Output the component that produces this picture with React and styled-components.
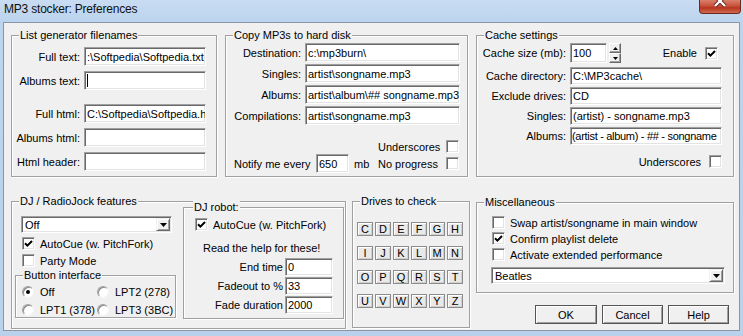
import React from 'react';
import styled, { createGlobalStyle } from 'styled-components';

const GlobalStyle = createGlobalStyle`
  html, body { margin: 0; padding: 0; background: #b9d1ea; }
  * { box-sizing: border-box; }
`;

const Check = ({ on }) => (
  <CheckBox>
    {on && (
      <svg width="9" height="9" viewBox="0 0 9 9">
        <path d="M1 4.2 L3.4 6.6 L8 2" stroke="#000" strokeWidth="2" fill="none" />
      </svg>
    )}
  </CheckBox>
);

const CheckOption = ({ on, children }) => (
  <CheckRow>
    <Check on={on} />
    <span>{children}</span>
  </CheckRow>
);

const RadioOption = ({ on, children }) => (
  <CheckRow $gap={6}>
    <RadioDot>{on && <Dot />}</RadioDot>
    <span>{children}</span>
  </CheckRow>
);

const DropDown = ({ width, children }) => (
  <Combo $w={width}>
    <span>{children}</span>
    <ArrowButton>
      <svg width="7" height="4" viewBox="0 0 7 4"><path d="M0 0 H7 L3.5 4 Z" fill="#000" /></svg>
    </ArrowButton>
  </Combo>
);

const drives = 'CDEFGHIJKLMNOPQRSTUVWXYZ'.split('');

export default function App() {
  return (
    <>
      <GlobalStyle />
      <Window>
        <TitleBar>
          <Title>MP3 stocker: Preferences</Title>
          <CloseButton>
            <svg width="14" height="14" viewBox="0 0 14 14">
              <path d="M2 2 L12 12 M12 2 L2 12" stroke="#5a1a12" strokeWidth="4" />
              <path d="M2 2 L12 12 M12 2 L2 12" stroke="#fff" strokeWidth="2.4" />
            </svg>
          </CloseButton>
        </TitleBar>

        <Client>
          <TopRow>
            <GroupBox $w={206} $h={142}>
              <Caption>List generator filenames</Caption>
              <FormGrid $cols="68px 122px" $pad="11px 0 0 0" $rowGap={5}>
                <FieldLabel>Full text:</FieldLabel>
                <Edit>:\Softpedia\Softpedia.txt</Edit>
                <FieldLabel>Albums text:</FieldLabel>
                <Edit><Caret /></Edit>
                <FieldLabel $push={9}>Full html:</FieldLabel>
                <Edit $push={9}>C:\Softpedia\Softpedia.h</Edit>
                <FieldLabel>Albums html:</FieldLabel>
                <Edit />
                <FieldLabel>Html header:</FieldLabel>
                <Edit />
              </FormGrid>
            </GroupBox>

            <GroupBox $w={243} $h={142}>
              <Caption>Copy MP3s to hard disk</Caption>
              <FormGrid $cols="75px 155px" $pad="7px 0 0 0" $rowGap={2}>
                <FieldLabel>Destination:</FieldLabel>
                <Edit>c:\mp3burn\</Edit>
                <FieldLabel>Singles:</FieldLabel>
                <Edit>artist\songname.mp3</Edit>
                <FieldLabel>Albums:</FieldLabel>
                <Edit>artist\album\## songname.mp3</Edit>
                <FieldLabel>Compilations:</FieldLabel>
                <Edit>artist\songname.mp3</Edit>
              </FormGrid>
              <OptionLine $top={15} $right={8}>
                <OptLabel>Underscores</OptLabel>
                <Check />
              </OptionLine>
              <NotifyLine>
                <NotifyText>Notify me every</NotifyText>
                <Edit $w={33}>650</Edit>
                <Unit>mb</Unit>
                <OptLabel $auto>No progress</OptLabel>
                <Check />
              </NotifyLine>
            </GroupBox>

            <GroupBox $w={258} $h={142}>
              <Caption>Cache settings</Caption>
              <FormGrid $cols="89px 152px" $pad="7px 0 0 0" $rowGap={2}>
                <FieldLabel>Cache size (mb):</FieldLabel>
                <SizeLine>
                  <Edit $w={37} $h={20}>100</Edit>
                  <Spinner>
                    <SpinHalf><svg width="5" height="3" viewBox="0 0 5 3"><path d="M0 3 L2.5 0 L5 3 Z" fill="#000" /></svg></SpinHalf>
                    <SpinHalf><svg width="5" height="3" viewBox="0 0 5 3"><path d="M0 0 H5 L2.5 3 Z" fill="#000" /></svg></SpinHalf>
                  </Spinner>
                  <OptLabel $auto $plain>Enable</OptLabel>
                  <Check on />
                </SizeLine>
                <FieldLabel $push={2}>Cache directory:</FieldLabel>
                <Edit $h={18} $push={2}>C:\MP3cache\</Edit>
                <FieldLabel>Exclude drives:</FieldLabel>
                <Edit $h={18}>CD</Edit>
                <FieldLabel>Singles:</FieldLabel>
                <Edit $h={18}>(artist) - songname.mp3</Edit>
                <FieldLabel>Albums:</FieldLabel>
                <Edit $h={18} $tight>(artist - album) - ## - songname</Edit>
              </FormGrid>
              <OptionLine $top={10} $right={11}>
                <OptLabel $plain>Underscores</OptLabel>
                <Check />
              </OptionLine>
            </GroupBox>
          </TopRow>

          <BottomRow>
            <GroupBox $w={335} $h={128} $flex>
              <Caption>DJ / RadioJock features</Caption>
              <DjColumn>
                <DropDown width={151}>Off</DropDown>
                <IndentList>
                  <CheckOption on>AutoCue (w. PitchFork)</CheckOption>
                  <CheckOption>Party Mode</CheckOption>
                </IndentList>
                <GroupBox $w={161} $h={43} $top={8}>
                  <Caption>Button interface</Caption>
                  <RadioGrid>
                    <RadioOption on>Off</RadioOption>
                    <RadioOption>LPT2 (278)</RadioOption>
                    <RadioOption>LPT1 (378)</RadioOption>
                    <RadioOption>LPT3 (3BC)</RadioOption>
                  </RadioGrid>
                </GroupBox>
              </DjColumn>
              <GroupBox $w={161} $h={112} $top={5} $pad="10px 10px 0 11px">
                <Caption $left={9}>DJ robot:</Caption>
                <CheckOption on>AutoCue (w. PitchFork)</CheckOption>
                <Note>Read the help for these!</Note>
                <RobotGrid>
                  <FieldLabel>End time</FieldLabel>
                  <Edit $h={18}>0</Edit>
                  <FieldLabel>Fadeout to %</FieldLabel>
                  <Edit $h={18}>33</Edit>
                  <FieldLabel>Fade duration</FieldLabel>
                  <Edit $h={18}>2000</Edit>
                </RobotGrid>
              </GroupBox>
            </GroupBox>

            <GroupBox $w={118} $h={127} $pad="20px 0 0 4px">
              <Caption>Drives to check</Caption>
              <DriveGrid>
                {drives.map((d) => (
                  <DriveCell key={d}>{d}</DriveCell>
                ))}
              </DriveGrid>
            </GroupBox>

            <RightColumn>
              <GroupBox $w={258} $h={91} $top={1} $pad="13px 0 0 14px">
                <Caption>Miscellaneous</Caption>
                <MiscList>
                  <CheckOption>Swap artist/songname in main window</CheckOption>
                  <CheckOption on>Confirm playlist delete</CheckOption>
                  <CheckOption>Activate extended performance</CheckOption>
                </MiscList>
                <DropDown width={234}>Beatles</DropDown>
              </GroupBox>
              <ButtonRow>
                <PushButton $w={62}>OK</PushButton>
                <PushButton>Cancel</PushButton>
                <PushButton>Help</PushButton>
              </ButtonRow>
            </RightColumn>
          </BottomRow>
        </Client>
      </Window>
    </>
  );
}

// Styled Components

const Window = styled.div`
  width: 743px;
  height: 336px;
  overflow: hidden;
  display: flex;
  flex-direction: column;
  background: linear-gradient(#c8dcf2, #bcd4ee 22px, #b9d1ea);
  font-family: "Liberation Sans", Arial, sans-serif;
  font-size: 11px;
  color: #000;
`;

const TitleBar = styled.div`
  height: 22px;
  flex: none;
  display: flex;
  justify-content: space-between;
  align-items: flex-start;
  padding: 0 2px 0 4px;
`;

const Title = styled.div`
  font-size: 12px;
  line-height: 14px;
  padding-top: 2px;
  letter-spacing: -0.2px;
  color: #101010;
`;

const CloseButton = styled.div`
  width: 42px;
  height: 14px;
  display: flex;
  justify-content: center;
  align-items: flex-start;
  overflow: hidden;
  border: 1px solid #6b2a21;
  border-top: none;
  border-radius: 0 0 4px 4px;
  background: linear-gradient(#d9806c 0%, #c9523b 45%, #b8361f 60%, #cf6a50 100%);

  svg {
    margin-top: -6px;
  }
`;

const Client = styled.div`
  margin: 0 3px 0 3px;
  height: 309px;
  background: #f0f0f0;
  border: 1px solid #8896a6;
  display: flex;
  flex-direction: column;
`;

const TopRow = styled.div`
  display: flex;
  gap: 8px;
  padding: 12px 0 0 7px;
  align-items: flex-start;
`;

const BottomRow = styled.div`
  display: flex;
  gap: 6px;
  padding: 0 0 0 7px;
  margin-top: 24px;
  align-items: flex-start;
`;

const GroupBox = styled.div`
  position: relative;
  flex: none;
  width: ${(p) => p.$w}px;
  height: ${(p) => p.$h}px;
  margin-top: ${(p) => p.$top || 0}px;
  padding: ${(p) => p.$pad || '0'};
  border: 1px solid #a0a0a0;
  box-shadow: 1px 1px 0 #fff, inset 1px 1px 0 #fff;
  display: ${(p) => (p.$flex ? 'flex' : 'block')};
  gap: 7px;
  align-items: flex-start;
  ${(p) => p.$flex && 'padding-left: 3px;'}
`;

const Caption = styled.span`
  position: absolute;
  top: -8px;
  left: ${(p) => p.$left || 7}px;
  padding: 0 1px;
  line-height: 14px;
  background: #f0f0f0;
  white-space: nowrap;
`;

const FormGrid = styled.div`
  display: grid;
  grid-template-columns: ${(p) => p.$cols};
  column-gap: 4px;
  row-gap: ${(p) => p.$rowGap}px;
  padding: ${(p) => p.$pad};
  align-items: center;
`;

const FieldLabel = styled.span`
  text-align: right;
  white-space: nowrap;
  margin-top: ${(p) => p.$push || 0}px;
`;

const Edit = styled.div`
  height: ${(p) => p.$h || 19}px;
  width: ${(p) => (p.$w ? `${p.$w}px` : 'auto')};
  margin-top: ${(p) => p.$push || 0}px;
  flex: none;
  display: flex;
  align-items: center;
  padding: 0 ${(p) => (p.$tight ? 1 : 2)}px;
  letter-spacing: ${(p) => (p.$tight ? '-0.3px' : 'normal')};
  overflow: hidden;
  white-space: nowrap;
  background: #fff;
  border: 1px solid;
  border-color: #a0a0a0 #fff #fff #a0a0a0;
  box-shadow: inset 1px 1px 0 #696969, inset -1px -1px 0 #e3e3e3;
`;

const Caret = styled.span`
  width: 1px;
  height: 13px;
  background: #000;
`;

const CheckBox = styled.span`
  width: 13px;
  height: 13px;
  flex: none;
  display: inline-flex;
  align-items: center;
  justify-content: center;
  background: #fff;
  border: 1px solid;
  border-color: #a0a0a0 #fff #fff #a0a0a0;
  box-shadow: inset 1px 1px 0 #696969, inset -1px -1px 0 #e3e3e3;
`;

const CheckRow = styled.div`
  display: flex;
  align-items: center;
  gap: ${(p) => p.$gap || 5}px;
  height: 13px;
  white-space: nowrap;
`;

const RadioDot = styled.span`
  width: 12px;
  height: 12px;
  flex: none;
  border-radius: 50%;
  display: inline-flex;
  align-items: center;
  justify-content: center;
  background: #fff;
  border: 1px solid;
  border-color: #a0a0a0 #f4f4f4 #f4f4f4 #a0a0a0;
  box-shadow: inset 1px 1px 0 #8a8a8a;
`;

const Dot = styled.span`
  width: 4px;
  height: 4px;
  border-radius: 50%;
  background: #000;
`;

const OptionLine = styled.div`
  display: flex;
  justify-content: flex-end;
  align-items: center;
  margin-top: ${(p) => p.$top}px;
  padding-right: ${(p) => p.$right}px;
  height: 13px;
`;

const OptLabel = styled.span`
  width: ${(p) => (p.$plain ? 'auto' : '68px')};
  margin-left: ${(p) => (p.$auto ? 'auto' : '0')};
  margin-right: ${(p) => (p.$plain ? '8px' : '0')};
  white-space: nowrap;
`;

const NotifyLine = styled.div`
  display: flex;
  align-items: center;
  margin-top: 1px;
  padding: 0 8px 0 8px;
`;

const NotifyText = styled.span`
  width: 82px;
  white-space: nowrap;
`;

const Unit = styled.span`
  margin-left: 5px;
`;

const SizeLine = styled.div`
  display: flex;
  align-items: center;
  padding-right: 4px;
`;

const Spinner = styled.div`
  width: 12px;
  height: 20px;
  margin-left: 2px;
  display: flex;
  flex-direction: column;
`;

const SpinHalf = styled.span`
  flex: 1;
  display: flex;
  align-items: center;
  justify-content: center;
  background: #f0f0f0;
  border: 1px solid;
  border-color: #fff #696969 #696969 #fff;
  box-shadow: inset -1px -1px 0 #a0a0a0;
`;

const DjColumn = styled.div`
  width: 161px;
  flex: none;
  padding-top: 14px;
  display: flex;
  flex-direction: column;

  & > :first-child {
    margin-left: 6px;
  }
`;

const IndentList = styled.div`
  display: flex;
  flex-direction: column;
  gap: 4px;
  margin-top: 4px;
  padding-left: 7px;
`;

const Combo = styled.div`
  width: ${(p) => p.$w}px;
  height: 17px;
  flex: none;
  display: flex;
  align-items: center;
  justify-content: space-between;
  padding: 1px 1px 1px 3px;
  background: #fff;
  border: 1px solid;
  border-color: #a0a0a0 #fff #fff #a0a0a0;
  box-shadow: inset 1px 1px 0 #696969, inset -1px -1px 0 #e3e3e3;
`;

const ArrowButton = styled.span`
  width: 14px;
  height: 13px;
  display: flex;
  align-items: center;
  justify-content: center;
  background: #f0f0f0;
  border: 1px solid;
  border-color: #f0f0f0 #696969 #696969 #f0f0f0;
  box-shadow: inset 1px 1px 0 #fff, inset -1px -1px 0 #a0a0a0;
`;

const RadioGrid = styled.div`
  display: grid;
  grid-template-columns: 75px auto;
  row-gap: 5px;
  padding: 9px 0 0 6px;
`;

const Note = styled.div`
  margin-top: 10px;
  padding-left: 8px;
  line-height: 14px;
  white-space: nowrap;
`;

const RobotGrid = styled.div`
  display: grid;
  grid-template-columns: auto 48px;
  justify-content: end;
  column-gap: 2px;
  row-gap: 1px;
  margin-top: 3px;
  align-items: center;
`;

const DriveGrid = styled.div`
  display: grid;
  grid-template-columns: repeat(6, 16px);
  grid-auto-rows: 14px;
  column-gap: 2px;
  row-gap: 10px;
`;

const DriveCell = styled.span`
  display: flex;
  align-items: center;
  justify-content: center;
  border: 1px solid #8c8c8c;
  background: #e9e9e9;
  box-shadow: inset 1px 1px 0 #fff, inset -1px -1px 0 #d0d0d0;
`;

const RightColumn = styled.div`
  width: 258px;
  flex: none;
  display: flex;
  flex-direction: column;
`;

const MiscList = styled.div`
  display: flex;
  flex-direction: column;
  gap: 3px;
  padding-left: 1px;
  margin-bottom: 6px;
`;

const ButtonRow = styled.div`
  display: flex;
  justify-content: flex-end;
  gap: 5px;
  margin-top: 12px;
  padding-right: 5px;
`;

const PushButton = styled.button`
  width: ${(p) => p.$w || 61}px;
  height: 19px;
  padding: 0;
  font-family: "Liberation Sans", Arial, sans-serif;
  font-size: 11px;
  color: #000;
  background: #f0f0f0;
  border: 1px solid #555;
  box-shadow: inset 1px 1px 0 #fff, inset -1px -1px 0 #a0a0a0;
`;
